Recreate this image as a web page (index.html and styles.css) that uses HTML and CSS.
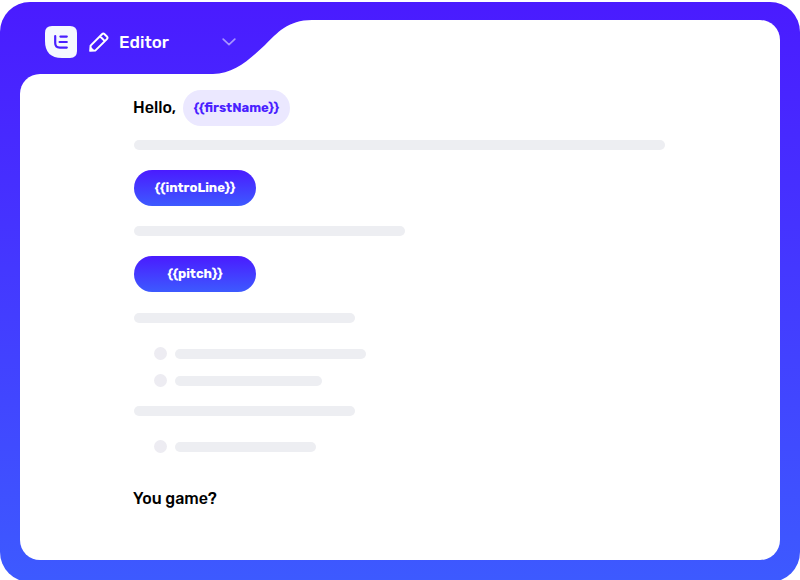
FILE: index.html
```html
<!DOCTYPE html>
<html lang="en">
<head>
<meta charset="utf-8">
<meta name="viewport" content="width=device-width, initial-scale=1">
<title>Editor</title>
<link rel="stylesheet" href="styles.css">
</head>
<body>
<div class="frame">
  <header class="topbar">
    <div class="tab">
      <svg class="logo" viewBox="0 0 32 32" aria-hidden="true">
        <path d="M7 0H25Q32 0 32 7V25Q32 32 25 32H17Q0 32 0 15V7Q0 0 7 0Z" fill="#f5f8ff"/>
        <path d="M10.2 10.2V17Q10.2 21.6 14.8 21.6H21.8M15.4 10.6H21.8M14.6 16H21.8" fill="none" stroke="#4a1fff" stroke-width="2.2" stroke-linecap="round" stroke-linejoin="round"/>
      </svg>
      <button class="menu" type="button">
        <svg class="pencil" viewBox="0 0 20 20" aria-hidden="true">
          <path d="M1.2 18.8L1.6 13.6L13 2.2Q14.3 .9 15.6 2.2L17.9 4.5Q19.2 5.8 17.9 7.1L6.5 18.4ZM11 4.3L15.8 9.1" fill="none" stroke="#fff" stroke-width="2" stroke-linejoin="round"/>
          <path d="M1.2 18.8L1.5 14.5L5.5 18.5Z" fill="#fff"/>
        </svg>
        <span class="menu-label">Editor</span>
        <svg class="chevron" viewBox="0 0 14 8" aria-hidden="true">
          <path d="M1.2 1.2L7 6.6L12.8 1.2" fill="none" stroke="#a794ff" stroke-width="1.7" stroke-linecap="round" stroke-linejoin="round"/>
        </svg>
      </button>
    </div>
    <svg class="swoop" viewBox="0 0 102 54" aria-hidden="true">
      <path d="M0 54H3C24 54 40 39 55 25C67 13 78 0 102 0V54Z" fill="#fff"/>
    </svg>
    <div class="shelf"></div>
  </header>
  <main class="document">
    <p class="greeting">Hello, <span class="chip chip-soft">{{firstName}}</span></p>
    <div class="line line-full"></div>
    <span class="chip chip-solid">{{introLine}}</span>
    <div class="line line-half"></div>
    <span class="chip chip-solid">{{pitch}}</span>
    <div class="line line-short"></div>
    <ul class="points">
      <li><span class="line item-long"></span></li>
      <li><span class="line item-mid"></span></li>
    </ul>
    <div class="line line-short"></div>
    <ul class="points">
      <li><span class="line item-small"></span></li>
    </ul>
    <p class="closing">You game?</p>
  </main>
</div>
</body>
</html>
```
FILE: styles.css
```css
* {
  box-sizing: border-box;
}

html {
  height: 100%;
  overflow: hidden;
  background: #fff;
}

body {
  margin: 0;
  padding-top: 2px;
  font-family: Rubik, Roboto, "Liberation Sans", sans-serif;
  color: #000;
}

.frame {
  display: flex;
  flex-direction: column;
  min-height: 100vh;
  padding: 18px 20px 22px;
  border-radius: 30px;
  background: linear-gradient(#4a1bff, #3d5aff);
}

.topbar {
  display: flex;
  height: 54px;
}

.tab {
  display: flex;
  align-items: center;
  gap: 12px;
  width: 190px;
  padding: 0 0 10px 25px;
}

.logo {
  flex: none;
  width: 32px;
  height: 32px;
}

.menu {
  display: flex;
  flex: none;
  align-items: center;
  width: 147px;
  padding: 0;
  border: 0;
  background: none;
  color: #fff;
  font: 500 17px/20px Rubik, Roboto, "Liberation Sans", sans-serif;
  cursor: pointer;
}

.pencil {
  width: 20px;
  height: 20px;
}

.menu-label {
  margin-left: 10px;
}

.chevron {
  width: 14px;
  height: 8px;
  margin-left: auto;
}

.swoop {
  flex: none;
  width: 102px;
  height: 54px;
}

.shelf {
  flex: 1;
  border-top-right-radius: 20px;
  background: #fff;
}

.document {
  display: flex;
  flex: 1;
  flex-direction: column;
  align-items: flex-start;
  gap: 20px;
  padding: 16px 114px 48px;
  border-radius: 20px 0 20px 20px;
  background: #fff;
}

.greeting,
.closing {
  margin: 0 0 0 -1px;
  font-size: 16px;
  font-weight: 500;
  line-height: 24px;
}

.greeting {
  display: flex;
  align-items: center;
  gap: 7px;
  margin-bottom: -6px;
}

.chip {
  display: flex;
  align-items: center;
  justify-content: center;
  height: 36px;
  padding: 0 10px;
  border-radius: 18px;
  font-size: 13px;
  font-weight: 700;
  line-height: 18px;
}

.chip-soft {
  min-width: 107px;
  background: #ebe8ff;
  color: #4a1fff;
}

.chip-solid {
  min-width: 122px;
  background: linear-gradient(#4a1bff, #3d5aff);
  color: #fff;
}

.line {
  display: block;
  height: 10px;
  max-width: 100%;
  border-radius: 5px;
  background: #edeef2;
}

.line-full {
  width: 531px;
}

.line-half {
  width: 271px;
}

.line-short {
  width: 221px;
  margin-top: 1px;
}

.item-long {
  width: 191px;
}

.item-mid {
  width: 147px;
}

.item-small {
  width: 141px;
}

.points {
  display: flex;
  flex-direction: column;
  gap: 14px;
  margin: 4px 0 -2px;
  padding: 0 0 0 20px;
  list-style: none;
}

.points li {
  display: flex;
  align-items: center;
  gap: 8px;
}

.points li::before {
  width: 13px;
  height: 13px;
  border-radius: 50%;
  background: #edecf2;
  content: "";
}

.closing {
  margin-top: 16px;
}
```
